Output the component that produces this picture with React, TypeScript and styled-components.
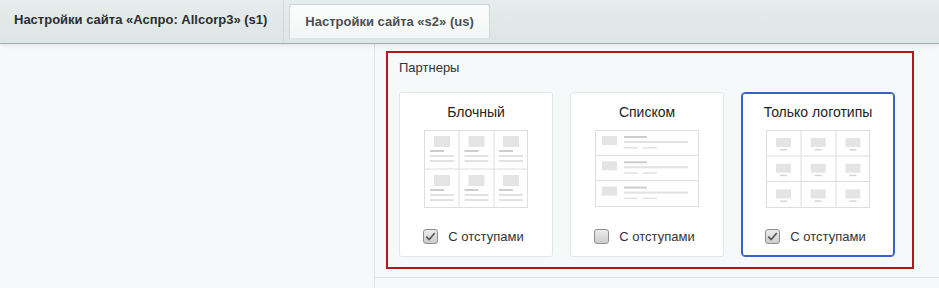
import React from 'react';
import styled, { createGlobalStyle } from 'styled-components';

const GlobalStyle = createGlobalStyle`
  html, body {
    margin: 0;
    padding: 0;
    background: #f5f9f9;
    font-family: "Liberation Sans", Arial, sans-serif;
  }
  * {
    box-sizing: border-box;
  }
`;

type Layout = 'blocks' | 'list' | 'logos';

const options: { id: Layout; title: string; checked: boolean; selected: boolean }[] = [
  { id: 'blocks', title: 'Блочный', checked: true, selected: false },
  { id: 'list', title: 'Списком', checked: false, selected: false },
  { id: 'logos', title: 'Только логотипы', checked: true, selected: true },
];

const BlocksThumb = () => {
  const cells = [];
  for (let r = 0; r < 2; r++) {
    for (let c = 0; c < 3; c++) {
      const x = c * 34.5;
      const y = r * 39;
      cells.push(
        <g key={`${r}-${c}`}>
          <rect x={x + 10} y={y + 6} width={16} height={11} fill="#e4e4e4" />
          <rect x={x + 6} y={y + 20} width={14} height={2} fill="#cdcdcd" />
          <rect x={x + 6} y={y + 25} width={24} height={2} fill="#e2e2e2" />
          <rect x={x + 6} y={y + 30} width={24} height={2} fill="#e2e2e2" />
        </g>
      );
    }
  }
  return (
    <svg width="104" height="78" viewBox="0 0 104 78">
      <rect x="0.5" y="0.5" width="103" height="77" fill="#fff" stroke="#dedede" />
      <line x1="35" y1="0" x2="35" y2="78" stroke="#dedede" />
      <line x1="70" y1="0" x2="70" y2="78" stroke="#dedede" />
      <line x1="0" y1="39" x2="104" y2="39" stroke="#dedede" />
      {cells}
    </svg>
  );
};

const ListThumb = () => {
  const rows = [0, 1, 2].map((r) => {
    const y = r * 25.3;
    return (
      <g key={r}>
        <rect x={7} y={y + 6} width={15} height={9} fill="#e4e4e4" />
        <rect x={29} y={y + 6} width={23} height={2} fill="#cdcdcd" />
        <rect x={29} y={y + 11} width={64} height={2} fill="#e2e2e2" />
        <rect x={29} y={y + 17} width={14} height={1.5} fill="#e2e2e2" />
        <rect x={48} y={y + 17} width={14} height={1.5} fill="#e2e2e2" />
      </g>
    );
  });
  return (
    <svg width="104" height="77" viewBox="0 0 104 77">
      <rect x="0.5" y="0.5" width="103" height="76" fill="#fff" stroke="#dedede" />
      <line x1="0" y1="25.5" x2="104" y2="25.5" stroke="#dedede" />
      <line x1="0" y1="50.5" x2="104" y2="50.5" stroke="#dedede" />
      {rows}
    </svg>
  );
};

const LogosThumb = () => {
  const cells = [];
  for (let r = 0; r < 3; r++) {
    for (let c = 0; c < 3; c++) {
      const x = c * 34.7;
      const y = r * 25.7;
      cells.push(
        <g key={`${r}-${c}`}>
          <rect x={x + 10} y={y + 8} width={15} height={9} fill="#e4e4e4" />
          <rect x={x + 14} y={y + 19} width={7} height={1.5} fill="#d4d4d4" />
        </g>
      );
    }
  }
  return (
    <svg width="104" height="78" viewBox="0 0 104 78">
      <rect x="0.5" y="0.5" width="103" height="77" fill="#fff" stroke="#dedede" />
      <line x1="35" y1="0" x2="35" y2="78" stroke="#dedede" />
      <line x1="70" y1="0" x2="70" y2="78" stroke="#dedede" />
      <line x1="0" y1="26" x2="104" y2="26" stroke="#dedede" />
      <line x1="0" y1="51.5" x2="104" y2="51.5" stroke="#dedede" />
      {cells}
    </svg>
  );
};

const thumbs: Record<Layout, React.FC> = {
  blocks: BlocksThumb,
  list: ListThumb,
  logos: LogosThumb,
};

const App: React.FC = () => {
  return (
    <Page>
      <GlobalStyle />
      <TabBar>
        <Tab $active>Настройки сайта «Аспро: Allcorp3» (s1)</Tab>
        <Tab>Настройки сайта «s2» (us)</Tab>
      </TabBar>
      <Body>
        <LeftCol />
        <RightCol>
          <Section>
            <Frame>
              <Label>Партнеры</Label>
              <Cards>
                {options.map((o) => {
                  const Thumb = thumbs[o.id];
                  return (
                    <Card key={o.id} $selected={o.selected}>
                      <CardTitle>{o.title}</CardTitle>
                      <ThumbBox>
                        <Thumb />
                      </ThumbBox>
                      <CheckRow>
                        <Check $checked={o.checked}>
                          {o.checked && (
                            <svg width="13" height="13" viewBox="0 0 13 13">
                              <path d="M2.2 6.6 L5.2 9.6 L10.8 3" fill="none" stroke="#595959" strokeWidth="1.7" />
                            </svg>
                          )}
                        </Check>
                        <CheckText>С отступами</CheckText>
                      </CheckRow>
                    </Card>
                  );
                })}
              </Cards>
            </Frame>
          </Section>
        </RightCol>
      </Body>
    </Page>
  );
};

export default App;

const Page = styled.div`
  width: 939px;
  height: 288px;
  overflow: hidden;
  background: #f5f9f9;
`;

const TabBar = styled.div`
  display: flex;
  align-items: flex-start;
  height: 44px;
  background: linear-gradient(#e7ecec, #dee5e5);
  border-bottom: 1px solid #a6aeae;
  box-shadow: 0 2px 4px rgba(0, 0, 0, 0.07);
  position: relative;
`;

const Tab = styled.div<{ $active?: boolean }>`
  font-size: 13px;
  font-weight: bold;
  white-space: nowrap;
  ${({ $active }) =>
    $active
      ? `
    height: 43px;
    line-height: 40px;
    padding: 0 16px 0 14px;
    color: #2a2e2e;
    border-right: 1px solid #d2d9d9;
  `
      : `
    margin: 4px 0 0 5px;
    height: 34px;
    line-height: 33px;
    padding: 0 15px 0 15px;
    color: #4a5050;
    border: 1px solid #cfd6d6;
    border-bottom: none;
    border-radius: 3px 3px 0 0;
    background: linear-gradient(#fcfdfd, #f3f6f6);
  `}
`;

const Body = styled.div`
  display: flex;
  height: 244px;
`;

const LeftCol = styled.div`
  width: 375px;
  border-right: 1px solid #dde3e3;
`;

const RightCol = styled.div`
  flex: 1;
`;

const Section = styled.div`
  padding: 7px 25px 8px 11px;
  border-bottom: 1px solid #dfe5e5;
`;

const Frame = styled.div`
  border: 2px solid #b0181e;
  padding: 7px 11px 10px 11px;
`;

const Label = styled.div`
  font-size: 13px;
  line-height: 15px;
  color: #333;
  margin-bottom: 17px;
`;

const Cards = styled.div`
  display: flex;
  gap: 17px;
`;

const Card = styled.div<{ $selected?: boolean }>`
  width: 154px;
  height: 165px;
  background: #fff;
  border: 1px solid ${({ $selected }) => ($selected ? '#3b60c4' : '#e2e6e6')};
  box-shadow: ${({ $selected }) => ($selected ? 'inset 0 0 0 1px #3b60c4' : 'none')};
  border-radius: ${({ $selected }) => ($selected ? '4px' : '3px')};
  padding-top: 11px;
  display: flex;
  flex-direction: column;
  align-items: center;
`;

const CardTitle = styled.div`
  font-size: 14px;
  line-height: 16px;
  color: #222;
  margin-bottom: 10px;
`;

const ThumbBox = styled.div`
  height: 78px;
  display: flex;
  align-items: flex-start;
  svg {
    display: block;
  }
`;

const CheckRow = styled.div`
  margin-top: 20px;
  display: flex;
  align-items: center;
  gap: 10px;
  height: 16px;
  margin-left: -5px;
`;

const Check = styled.span<{ $checked?: boolean }>`
  width: 15px;
  height: 15px;
  border: 1px solid #8f8f8f;
  border-radius: 3px;
  background: linear-gradient(#ececec, #cdcdcd);
  display: flex;
  align-items: center;
  justify-content: center;
  svg {
    display: block;
  }
`;

const CheckText = styled.span`
  font-size: 13px;
  color: #333;
`;
